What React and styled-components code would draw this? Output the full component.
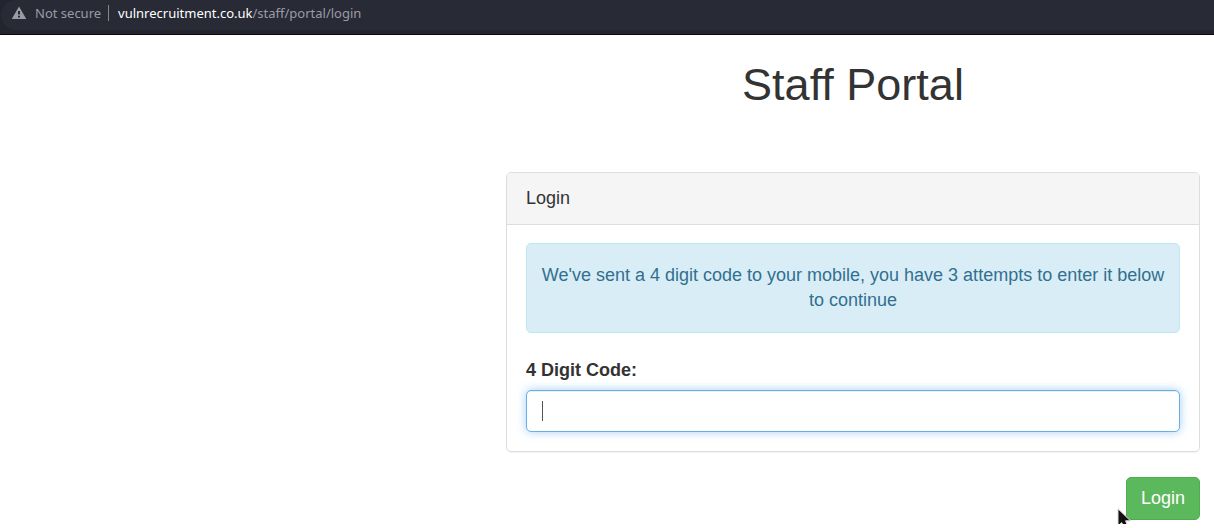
import React from "react";
import styled, { createGlobalStyle } from "styled-components";

const GlobalStyle = createGlobalStyle`
  *, *::before, *::after { box-sizing: border-box; }
  body {
    margin: 0;
    background: #fff;
    color: #333;
    font: 18px/25px "Liberation Sans", Arial, sans-serif;
  }
`;

const BrowserBar = styled.header`
  height: 35px;
  padding: 0 0 4px 1px;
  background: #22242e;
  border-bottom: 1px solid #08080c;
`;

const AddressBox = styled.div`
  display: flex;
  align-items: center;
  height: 30px;
  padding: 0 0 4px 10px;
  border-radius: 15px 0 0 15px;
  background: #282a36;
  font: 13px/18px "Noto Sans", sans-serif;
  color: #9a9ca3;
`;

const WarningIcon = styled.svg`
  width: 16px;
  height: 16px;
  margin-right: 8px;
`;

const Security = styled.span`
  padding-right: 7px;
  margin-right: 9px;
  border-right: 1px solid #85878f;
  line-height: 16px;
`;

const Host = styled.span`
  color: #fff;
`;

const Page = styled.main`
  max-width: 722px;
  margin-left: auto;
  padding: 25px 14px 4px;
`;

const Title = styled.h1`
  margin: 0 0 62px;
  font-size: 45px;
  line-height: 50px;
  font-weight: 400;
  text-align: center;
`;

const Panel = styled.section`
  border: 1px solid #ddd;
  border-radius: 5px;
  box-shadow: 0 1px 1px rgba(0, 0, 0, 0.05);
`;

const PanelHeading = styled.div`
  padding: 13px 19px;
  border-bottom: 1px solid #ddd;
  border-radius: 4px 4px 0 0;
  background: #f5f5f5;
`;

const PanelBody = styled.div`
  padding: 18px 19px 19px;
`;

const Notice = styled.p`
  margin: 0 0 25px;
  padding: 19px 14px;
  border: 1px solid #bce8f1;
  border-radius: 5px;
  background: #d9edf7;
  color: #31708f;
  text-align: center;
`;

const Label = styled.label`
  display: block;
  margin-bottom: 7px;
  font-weight: 700;
`;

const Field = styled.div`
  position: relative;
`;

const CodeInput = styled.input`
  display: block;
  width: 100%;
  height: 42px;
  padding: 7px 15px;
  border: 1px solid #66afe9;
  border-radius: 5px;
  outline: 0;
  background: #fff;
  color: #555;
  caret-color: transparent;
  font: inherit;
  box-shadow: inset 0 1px 1px rgba(0, 0, 0, 0.075), 0 0 10px rgba(102, 175, 233, 0.6);
`;

const Caret = styled.span`
  position: absolute;
  left: 16px;
  top: 11px;
  width: 1px;
  height: 20px;
  background: #555;
  pointer-events: none;
`;

const Actions = styled.div`
  display: flex;
  justify-content: flex-end;
  margin-top: 25px;
`;

const ButtonWrap = styled.div`
  position: relative;
`;

const SubmitButton = styled.button`
  display: block;
  height: 43px;
  padding: 0 14px;
  border: 1px solid #4cae4c;
  border-radius: 5px;
  background: #5cb85c;
  color: #fff;
  font: inherit;
`;

const Pointer = styled.svg`
  position: absolute;
  left: -9px;
  top: 31px;
  width: 16px;
  height: 16px;
  pointer-events: none;
`;

export default function App() {
  return (
    <>
      <GlobalStyle />
      <BrowserBar>
        <AddressBox>
          <WarningIcon viewBox="0 0 16 16" aria-hidden="true">
            <path
              fill="#9a9ca3"
              fillRule="evenodd"
              d="M8 1.5 15.3 14H.7ZM7 6v3.5h2V6ZM7 10.7v1.8h2v-1.8Z"
            />
          </WarningIcon>
          <Security>Not secure</Security>
          <Host>vulnrecruitment.co.uk</Host>
          <span>/staff/portal/login</span>
        </AddressBox>
      </BrowserBar>
      <Page>
        <Title>Staff Portal</Title>
        <form onSubmit={(event) => event.preventDefault()}>
          <Panel>
            <PanelHeading>Login</PanelHeading>
            <PanelBody>
              <Notice>
                We've sent a 4 digit code to your mobile, you have 3 attempts to enter it below to
                continue
              </Notice>
              <Label htmlFor="code">4 Digit Code:</Label>
              <Field>
                <CodeInput id="code" type="text" name="code" autoComplete="off" />
                <Caret />
              </Field>
            </PanelBody>
          </Panel>
          <Actions>
            <ButtonWrap>
              <SubmitButton type="submit">Login</SubmitButton>
              <Pointer viewBox="0 0 16 16" aria-hidden="true">
                <path
                  d="M1 .8V18L4.7 14.6 7 19H11L8.6 12.8H13.5Z"
                  fill="#111"
                  stroke="#ddd"
                  strokeWidth="1"
                />
              </Pointer>
            </ButtonWrap>
          </Actions>
        </form>
      </Page>
    </>
  );
}
